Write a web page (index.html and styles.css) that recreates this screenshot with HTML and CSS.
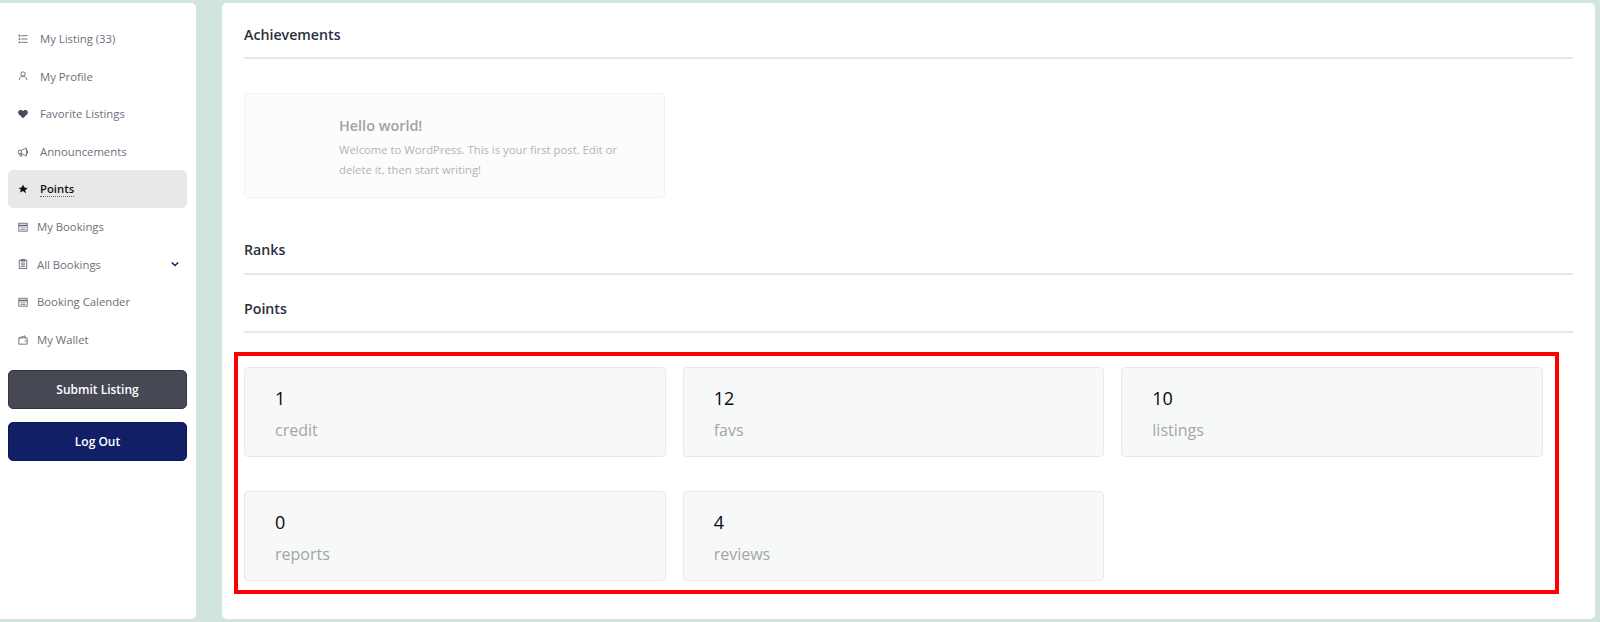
FILE: index.html
```html
<!DOCTYPE html>
<html>
<head>
  <meta charset="UTF-8">
  <title>Points</title>
  <link rel="stylesheet" href="styles.css">
</head>
<body>

  <div class="sidebar">
    <ul class="menu">
      <li class="menu-item">
        <svg class="icon" viewBox="0 0 12 12"><path d="M.8 2h2M.8 6h2M.8 10h2" stroke-width="2"/><path d="M4 2h7.500M4 6h7.500M4 10h7.500"/></svg>
        <span>My Listing (33)</span>
      </li>
      <li class="menu-item">
        <svg class="icon" viewBox="0 0 12 12"><circle cx="6" cy="3.600" r="2.600"/><path d="M1.500 11c0-3 1.800-4.800 4.500-4.800s4.500 1.800 4.500 4.800"/></svg>
        <span>My Profile</span>
      </li>
      <li class="menu-item">
        <svg class="icon" viewBox="0 0 12 12"><path class="solid" d="M6 11.200L1 6.200C-.6 4.400.3 1.400 3 1.200c1.300-.1 2.300.5 3 1.600.7-1.100 1.700-1.700 3-1.600 2.700.2 3.600 3.200 2 5z"/></svg>
        <span>Favorite Listings</span>
      </li>
      <li class="menu-item">
        <svg class="icon" viewBox="0 0 12 12"><path d="M.5 4h3.500l6-2.800v9.600L4 8H.5zM4 4v4M2 8l.8 3h1.700l-.7-3M10 4.500h1.500v3H10"/></svg>
        <span>Announcements</span>
      </li>
      <li class="menu-item active">
        <svg class="icon" viewBox="0 0 12 12"><path class="solid" d="M6 .6l1.700 3.600 3.900.5-2.900 2.700.8 3.900L6 8.400l-3.500 1.900.8-3.900L.4 4.700l3.900-.5z"/></svg>
        <span class="active-label">Points</span>
      </li>
      <li class="menu-item narrow">
        <svg class="icon" viewBox="0 0 12 12"><rect x="1" y="1.500" width="10" height="9.500"/><path d="M1 4.200h10" stroke-width="1.800"/><path d="M3 7h6M3 9h6" stroke-width=".8"/></svg>
        <span>My Bookings</span>
      </li>
      <li class="menu-item narrow">
        <svg class="icon" viewBox="0 0 12 12"><rect x="1.500" y="1.500" width="9" height="10"/><rect x="4" y=".5" width="4" height="2"/><path d="M3.500 5h5M3.500 7h5M3.500 9h5"/></svg>
        <span>All Bookings</span>
        <svg class="chevron" viewBox="0 0 10 6"><path d="M1 1l4 4 4-4"/></svg>
      </li>
      <li class="menu-item narrow">
        <svg class="icon" viewBox="0 0 12 12"><rect x="1" y="1.500" width="10" height="9.500"/><path d="M1 4.200h10" stroke-width="1.800"/><path d="M3 7h6M3 9h6" stroke-width=".8"/></svg>
        <span>Booking Calender</span>
      </li>
      <li class="menu-item narrow">
        <svg class="icon" viewBox="0 0 12 12"><path d="M1 3.500h10v7.500H1zM1 3.500L8.500 1v2.500M8 7.200h3"/></svg>
        <span>My Wallet</span>
      </li>
    </ul>
    <button class="side-button submit">Submit Listing</button>
    <button class="side-button logout">Log Out</button>
  </div>

  <div class="content">
    <h3 class="section-title first">Achievements</h3>
    <div class="achievement">
      <h4>Hello world!</h4>
      <p>Welcome to WordPress. This is your first post. Edit or delete it, then start writing!</p>
    </div>

    <h3 class="section-title ranks">Ranks</h3>
    <h3 class="section-title points">Points</h3>

    <div class="highlight">
      <div class="points-grid">
        <div class="point-card"><b>1</b><span>credit</span></div>
        <div class="point-card"><b>12</b><span>favs</span></div>
        <div class="point-card"><b>10</b><span>listings</span></div>
        <div class="point-card"><b>0</b><span>reports</span></div>
        <div class="point-card"><b>4</b><span>reviews</span></div>
      </div>
    </div>
  </div>

</body>
</html>
```

FILE: styles.css
```css
:root {
  --page-bg: #d2e4de;
  --menu-text: #6c6f7c;
  --icon-color: #5d5f70;
  --line-color: #e6e8ea;
}
* {
  box-sizing: border-box;
}
html, body {
  height: 622px;
  overflow: hidden;
}
body {
  display: flex;
  gap: 26px;
  margin: 0;
  padding: 3px 5px 3px 0;
  background-color: var(--page-bg);
  font-family: "Open Sans", "Noto Sans", sans-serif;
  color: #2c2f3d;
}
.sidebar {
  width: 196px;
  flex: none;
  padding: 17px 9px 0 8px;
  background-color: #fff;
  border-radius: 0 5px 5px 0;
}
.menu {
  list-style: none;
  margin: 0 0 12px;
  padding: 0;
}
.menu-item {
  display: flex;
  align-items: center;
  height: 37.6px;
  padding-left: 10px;
  border-radius: 5px;
  font-size: 11.3px;
  color: var(--menu-text);
}
.menu-item .icon {
  width: 10px;
  height: 10px;
  flex: none;
  margin-right: 12px;
  fill: none;
  stroke: var(--icon-color);
  stroke-width: 1;
}
.menu-item.narrow .icon {
  margin-right: 9px;
}
.menu-item .solid {
  fill: #474a5e;
  stroke: none;
}
.menu-item .chevron {
  width: 8px;
  height: 6px;
  margin-left: auto;
  margin-right: 8px;
  fill: none;
  stroke: #15205f;
  stroke-width: 1.800;
}
.menu-item.active {
  background-color: #e8e8e8;
  color: #111;
  font-weight: 600;
}
.menu-item.active .solid {
  fill: #111;
}
.active-label {
  border-bottom: 1px dotted #666;
  line-height: 15px;
}
.side-button {
  display: block;
  width: 100%;
  height: 39px;
  margin-bottom: 13px;
  border-radius: 5px;
  color: #fff;
  font-family: inherit;
  font-size: 12px;
  font-weight: 600;
}
.submit {
  background-color: #464853;
  border: 1px solid #33353f;
}
.logout {
  background-color: #111f66;
  border: 1px solid #0d1850;
}
.content {
  flex: 1;
  padding: 0 22px;
  background-color: #fff;
  border-radius: 5px;
}
.section-title {
  margin: 0;
  padding-bottom: 13px;
  border-bottom: 2px solid var(--line-color);
  font-size: 14.2px;
  font-weight: 600;
  line-height: 20px;
}
.section-title.first {
  padding-top: 22px;
  padding-bottom: 12px;
}
.section-title.ranks {
  margin-top: 42px;
}
.section-title.points {
  margin-top: 24px;
  padding-bottom: 12px;
}
.achievement {
  width: 421px;
  height: 105px;
  margin-top: 34px;
  padding: 23px 40px 0 94px;
  background-color: #fcfcfc;
  border: 1px solid #f2f2f3;
  border-radius: 4px;
}
.achievement h4 {
  margin: 0 0 5px;
  font-size: 14.4px;
  font-weight: 600;
  line-height: 18px;
  color: #a0a1a7;
}
.achievement p {
  margin: 0;
  font-size: 11.3px;
  line-height: 20px;
  color: #b2b3b8;
}
.highlight {
  width: 1325px;
  height: 242px;
  margin: 19px 0 0 -10px;
  padding: 11px 12px 0 6px;
  border: 4px solid #f00;
}
.points-grid {
  display: grid;
  grid-template-columns: repeat(3, 1fr);
  gap: 34px 17px;
}
.point-card {
  display: flex;
  flex-direction: column;
  height: 90px;
  padding: 18px 30px 0;
  background-color: #f7f9f9;
  border: 1px solid #e7e9eb;
  border-radius: 4px;
}
.point-card b {
  font-size: 18px;
  font-weight: 400;
  line-height: 24px;
  color: #05070f;
}
.point-card span {
  margin-top: 9px;
  font-size: 16px;
  line-height: 22px;
  color: #a3a5ac;
}
```
